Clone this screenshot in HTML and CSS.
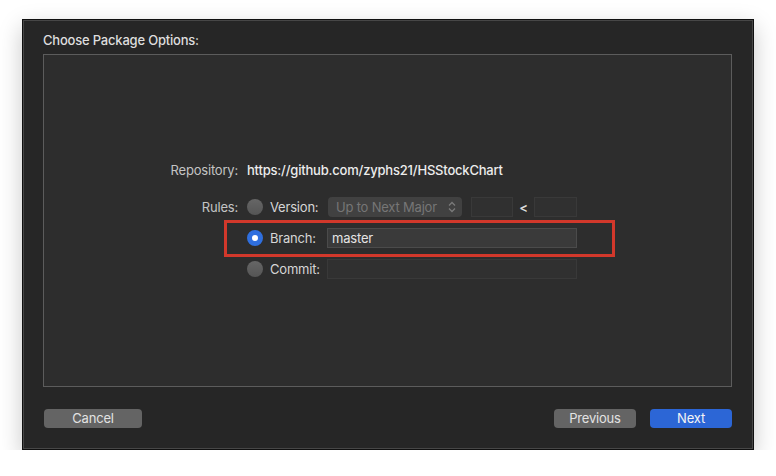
FILE: index.html
```html
<!DOCTYPE html>
<html lang="en">

<head>
  <meta charset="UTF-8">
  <meta name="viewport" content="width=device-width, initial-scale=1.0">
  <title>Choose Package Options</title>
  <link rel="stylesheet" href="styles.css">
</head>

<body>
<div class="sheet">
  <h1 class="sheet_title">Choose Package Options:</h1>
  <div class="sheet_box">
    <div class="pkg_form">
      <label class="pkg_label">Repository:</label>
      <div class="pkg_url">https://github.com/zyphs21/HSStockChart</div>

      <label class="pkg_label pkg_label_rules">Rules:</label>
      <div class="pkg_rules">
        <div class="rule_row">
          <i class="radio"></i>
          <span class="rule_name">Version:</span>
          <div class="popup">
            <span>Up to Next Major</span>
            <svg class="popup_arrows" width="8" height="12" viewBox="0 0 8 12">
              <path d="M1 4.5 L4 1.5 L7 4.5 M1 7.5 L4 10.5 L7 7.5" fill="none" stroke="#7a7a7a" stroke-width="1.3"/>
            </svg>
          </div>
          <div class="field field_off field_small"></div>
          <span class="rule_lt">&lt;</span>
          <div class="field field_off field_small2"></div>
        </div>
        <div class="rule_row rule_row_marked">
          <i class="radio radio_on"></i>
          <span class="rule_name">Branch:</span>
          <div class="field field_wide">master</div>
        </div>
        <div class="rule_row">
          <i class="radio"></i>
          <span class="rule_name">Commit:</span>
          <div class="field field_off field_wide"></div>
        </div>
      </div>
    </div>
  </div>
  <div class="sheet_buttons">
    <button class="btn">Cancel</button>
    <div class="sheet_buttons_right">
      <button class="btn">Previous</button>
      <button class="btn btn_blue">Next</button>
    </div>
  </div>
</div>
</body>

</html>
```

FILE: styles.css
```css
body,
h1,
p {
  padding: 0;
  margin: 0;
}

body {
  background: #ffffff;
  padding: 19px 0 0 22px;
  font-family: Inter, 'Liberation Sans', sans-serif;
  font-size: 13px;
  letter-spacing: -0.2px;
  color: #dcdcdc;
}

.sheet {
  width: 732px;
  height: 431px;
  box-sizing: border-box;
  background: #262626;
  border: 1px solid #101010;
  box-shadow: inset 0 0 0 1px #474747, 0 8px 22px rgba(0, 0, 0, 0.22);
  padding: 12px 21px 0 20px;
}

.sheet_title {
  font-size: 13px;
  font-weight: 500;
  color: #dedede;
  line-height: 16px;
  height: 22px;
}

.sheet_box {
  height: 333px;
  box-sizing: border-box;
  background: #2d2d2d;
  border: 1px solid #5c5c5c;
  display: flex;
  align-items: center;
  padding-bottom: 2px;
}

.pkg_form {
  display: grid;
  grid-template-columns: 194px auto;
  column-gap: 9px;
  row-gap: 17px;
  align-items: start;
}

.pkg_label {
  text-align: right;
  line-height: 20px;
  color: #c4c4c4;
}

.pkg_url {
  line-height: 20px;
  color: #ececec;
  font-weight: 500;
}

.pkg_rules {
  display: flex;
  flex-direction: column;
  gap: 11px;
}

.rule_row {
  position: relative;
  display: flex;
  align-items: center;
  height: 20px;
}

.rule_row_marked::after {
  content: '';
  position: absolute;
  left: -23px;
  top: -8px;
  width: 385px;
  height: 31px;
  border: 3px solid #d2382b;
}

.radio {
  width: 16px;
  height: 16px;
  border-radius: 50%;
  background: linear-gradient(#666666, #555555);
  box-sizing: border-box;
  flex: none;
}

.radio_on {
  border: 5px solid #2f6fdf;
  background: #ffffff;
}

.rule_name {
  margin-left: 7px;
  width: 51px;
  color: #d6d6d6;
}

.popup {
  width: 134px;
  height: 20px;
  margin-left: 7px;
  box-sizing: border-box;
  border-radius: 4px;
  background: #414141;
  color: #767676;
  display: flex;
  align-items: center;
  justify-content: space-between;
  padding: 0 6px 0 8px;
}

.popup_arrows {
  display: block;
}

.field {
  height: 20px;
  box-sizing: border-box;
  background: #3a3a3a;
  border: 1px solid #4b4b4b;
  color: #e4e4e4;
  line-height: 18px;
  padding: 0 4px;
  margin-left: 6px;
}

.field_off {
  background: #303030;
  border-color: #393939;
}

.field_small {
  width: 42px;
  margin-left: 9px;
}

.field_small2 {
  width: 43px;
  margin-left: 0;
}

.rule_lt {
  width: 21px;
  text-align: center;
  color: #dcdcdc;
  font-weight: 600;
}

.field_wide {
  width: 250px;
}

.sheet_buttons {
  display: flex;
  justify-content: space-between;
  margin-top: 22px;
  padding-left: 1px;
}

.sheet_buttons_right {
  display: flex;
  gap: 14px;
}

.btn {
  font-family: Inter, 'Liberation Sans', sans-serif;
  font-size: 13px;
  letter-spacing: -0.2px;
  color: #e2e2e2;
  background: #646464;
  border: none;
  border-radius: 4px;
  height: 19px;
  width: 98px;
  padding: 0;
  line-height: 19px;
}

.sheet_buttons_right .btn {
  width: 82px;
}

.btn_blue {
  background: #2c66d6;
  color: #f4f4f4;
}
```
